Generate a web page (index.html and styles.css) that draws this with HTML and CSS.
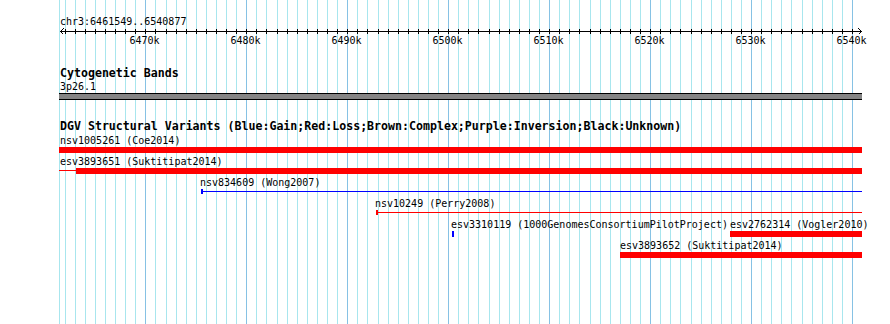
FILE: index.html
```html
<!DOCTYPE html>
<html lang="en">

<head>
    <meta charset="utf-8">
    <link rel="stylesheet" href="styles.css">
</head>

<body>
    <div class="panel">
        <svg class="grid" id="grid" width="890" height="324"></svg>
        <div class="track">
            <div class="ref-label">chr3:6461549..6540877</div>
            <svg class="ruler" id="ruler" width="890" height="20"></svg>
        </div>
        <div class="track band-track">
            <div class="track-title">Cytogenetic Bands</div>
            <div class="band-label">3p26.1</div>
            <div class="band"></div>
        </div>
        <div class="track dgv-track">
            <div class="track-title">DGV Structural Variants (Blue:Gain;Red:Loss;Brown:Complex;Purple:Inversion;Black:Unknown)</div>
            <div class="feature-row">
                <span class="feature-label" style="left: 60px">nsv1005261 (Coe2014)</span>
                <div class="glyph loss" style="left: 59px; width: 803px"></div>
            </div>
            <div class="feature-row">
                <span class="feature-label" style="left: 60px">esv3893651 (Suktitipat2014)</span>
                <div class="line loss" style="left: 59px; width: 17px"></div>
                <div class="glyph loss" style="left: 76px; width: 786px"></div>
            </div>
            <div class="feature-row">
                <span class="feature-label" style="left: 200px">nsv834609 (Wong2007)</span>
                <div class="line gain" style="left: 201px; width: 661px"></div>
                <div class="tick gain" style="left: 201px"></div>
            </div>
            <div class="feature-row">
                <span class="feature-label" style="left: 375px">nsv10249 (Perry2008)</span>
                <div class="line loss" style="left: 376px; width: 486px"></div>
                <div class="tick loss" style="left: 376px"></div>
            </div>
            <div class="feature-row">
                <span class="feature-label" style="left: 451px">esv3310119 (1000GenomesConsortiumPilotProject)</span>
                <div class="glyph gain" style="left: 452px; width: 2px"></div>
                <span class="feature-label" style="left: 730px">esv2762314 (Vogler2010)</span>
                <div class="glyph loss" style="left: 730px; width: 132px"></div>
            </div>
            <div class="feature-row">
                <span class="feature-label" style="left: 620px">esv3893652 (Suktitipat2014)</span>
                <div class="glyph loss" style="left: 620px; width: 242px"></div>
            </div>
        </div>
    </div>
    <script>
        const SVG_NS = "http://www.w3.org/2000/svg";
        const START = 6461549;
        const END = 6540877;
        const LEFT = 60;
        const SCALE = 0.010096;

        function pos(bp) {
            return Math.round(LEFT + (bp - START) * SCALE);
        }

        function rect(parent, x, y, w, h, cls) {
            let r = document.createElementNS(SVG_NS, "rect");
            r.setAttribute("x", x);
            r.setAttribute("y", y);
            r.setAttribute("width", w);
            r.setAttribute("height", h);
            r.setAttribute("class", cls);
            parent.appendChild(r);
        }

        function drawGrid() {
            const grid = document.getElementById("grid");
            rect(grid, 59, 0, 1, 324, "grid-minor");
            for (let k = Math.ceil(START / 1000); k * 1000 <= END; k++) {
                let cls = k % 10 === 0 ? "grid-major" : "grid-minor";
                rect(grid, pos(k * 1000), 0, 1, 324, cls);
            }
        }

        function drawRuler() {
            const ruler = document.getElementById("ruler");
            let right = pos(END);
            rect(ruler, LEFT, 3, right - LEFT, 1, "ink");
            for (let k = Math.ceil(START / 1000); k * 1000 <= END; k++) {
                let x = pos(k * 1000);
                rect(ruler, x, 1, 1, 5, "ink");
                if (k % 10 === 0) {
                    let t = document.createElementNS(SVG_NS, "text");
                    t.setAttribute("x", x - 0.5);
                    t.setAttribute("y", 16);
                    t.setAttribute("class", "tick-label");
                    t.textContent = k + "k";
                    ruler.appendChild(t);
                }
            }
            let arrows = document.createElementNS(SVG_NS, "path");
            arrows.setAttribute("d",
                "M" + (LEFT + 3.5) + " 0.5 L" + (LEFT + 0.5) + " 3.5 L" + (LEFT + 3.5) + " 6.5" +
                " M" + (right - 2.5) + " 0.5 L" + (right + 0.5) + " 3.5 L" + (right - 2.5) + " 6.5");
            arrows.setAttribute("class", "arrow");
            ruler.appendChild(arrows);
        }

        drawGrid();
        drawRuler();
    </script>
</body>

</html>
```

FILE: styles.css
```css
body {
    margin: 0;
    background-color: #ffffff;
}

.panel {
    position: relative;
    width: 890px;
    height: 324px;
    box-sizing: border-box;
    padding-top: 15px;
    overflow: hidden;
    font-family: "DejaVu Sans Mono", "Liberation Mono", monospace;
    font-size: 10px;
    line-height: 13px;
    color: #000000;
}

.grid {
    position: absolute;
    top: 0;
    left: 0;
    shape-rendering: crispEdges;
}

.grid-minor {
    fill: #a8e6ee;
}

.grid-major {
    fill: #86c2e4;
}

.track {
    position: relative;
}

.ref-label,
.band-label,
.track-title {
    padding-left: 60px;
    white-space: nowrap;
}

.ruler {
    display: block;
    shape-rendering: crispEdges;
}

.ink {
    fill: #000000;
}

.arrow {
    fill: none;
    stroke: #000000;
    stroke-width: 1;
}

.tick-label {
    font-family: "DejaVu Sans Mono", "Liberation Mono", monospace;
    font-size: 10px;
    text-anchor: middle;
    fill: #000000;
}

.track-title {
    font-weight: bold;
    font-size: 11.6px;
}

.band-track {
    margin-top: 19px;
}

.band {
    margin-left: 59px;
    width: 803px;
    height: 5px;
    background-color: #858585;
    border-top: 1px solid #000000;
    border-bottom: 1px solid #000000;
}

.dgv-track {
    margin-top: 20px;
}

.dgv-track .track-title {
    margin-bottom: 1px;
}

.feature-row {
    position: relative;
    height: 21px;
}

.feature-label {
    position: absolute;
    top: 0;
    white-space: nowrap;
}

.glyph {
    position: absolute;
    top: 13px;
    height: 6px;
}

.line {
    position: absolute;
    top: 15px;
    height: 1px;
}

.tick {
    position: absolute;
    top: 13px;
    width: 2px;
    height: 5px;
}

.loss {
    background-color: #ff0000;
}

.gain {
    background-color: #0000ff;
}
```
